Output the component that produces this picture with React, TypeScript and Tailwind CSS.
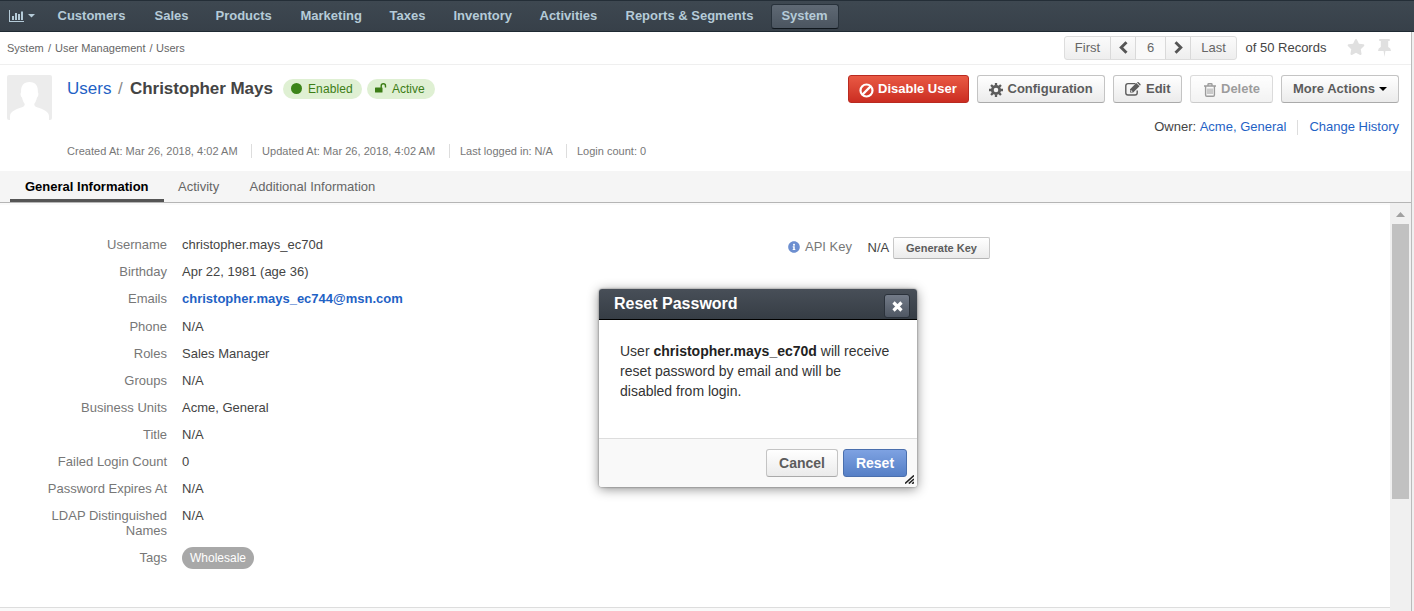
import React from "react";
import { FaInfoCircle, FaStar } from "react-icons/fa";

const navItems = [
  { label: "Customers", box: "w-[97px]" },
  { label: "Sales", box: "w-[61px]" },
  { label: "Products", box: "w-[85px]" },
  { label: "Marketing", box: "w-[89px]" },
  { label: "Taxes", box: "w-[64px]" },
  { label: "Inventory", box: "w-[86px]" },
  { label: "Activities", box: "w-[86px]" },
  { label: "Reports & Segments", box: "w-[145px]" },
];

const fields: { label: string; value: React.ReactNode; height?: string }[] = [
  { label: "Username", value: "christopher.mays_ec70d" },
  { label: "Birthday", value: "Apr 22, 1981 (age 36)" },
  {
    label: "Emails",
    value: <a className="font-bold text-[#1f62c5]">christopher.mays_ec744@msn.com</a>,
    height: "h-7",
  },
  { label: "Phone", value: "N/A" },
  { label: "Roles", value: "Sales Manager" },
  { label: "Groups", value: "N/A" },
  { label: "Business Units", value: "Acme, General" },
  { label: "Title", value: "N/A" },
  { label: "Failed Login Count", value: "0" },
  { label: "Password Expires At", value: "N/A" },
  { label: "LDAP Distinguished Names", value: "N/A", height: "h-[42px]" },
];

function Caret({ className }: { className: string }) {
  return (
    <svg className={className} width="8" height="4" viewBox="0 0 8 4">
      <path d="M0 0h8L4 4z" fill="currentColor" />
    </svg>
  );
}

function ChartIcon() {
  return (
    <svg width="15" height="12" viewBox="0 0 15 12" fill="currentColor">
      <path d="M0 0h1v11h14v1H0zM3 6h2v4H3zM6 3h2v7H6zM9 4h2v6H9zM12 1.500h2V10h-2z" />
    </svg>
  );
}

function UnlockIcon() {
  return (
    <svg width="12" height="10" viewBox="0 0 12 10">
      <rect x="0" y="4.500" width="7.500" height="5" rx="0.500" fill="currentColor" />
      <path d="M6.200 5V2.900a2.150 2.150 0 0 1 4.300 0V4.600" fill="none" stroke="currentColor" strokeWidth="1.400" />
    </svg>
  );
}

function BanIcon() {
  return (
    <svg width="15" height="15" viewBox="0 0 15 15" fill="none" stroke="currentColor" strokeWidth="2.200">
      <circle cx="7.500" cy="7.500" r="6" />
      <path d="M3.400 11.600 11.600 3.400" />
    </svg>
  );
}

function GearIcon() {
  return (
    <svg width="14" height="14" viewBox="0 0 14 14" stroke="currentColor">
      <circle cx="7" cy="7" r="3.700" fill="none" strokeWidth="2.800" />
      <path
        d="M7 0v2.500M7 11.500V14M0 7h2.500M11.500 7H14M2.050 2.050l1.800 1.800M10.150 10.150l1.800 1.800M2.050 11.950l1.800-1.800M10.150 3.850l1.800-1.800"
        strokeWidth="2.300"
      />
    </svg>
  );
}

function PinIcon() {
  return (
    <svg width="13" height="18" viewBox="0 0 13 18" fill="currentColor">
      <path d="M2 0h9q1 0 1 1t-1 1h-.8v6q2.800 1.200 2.800 4H7.400L6.500 18l-.9-6H0q0-2.800 2.800-4V2H2Q1 2 1 1t1-1z" />
    </svg>
  );
}

function TrashIcon() {
  return (
    <svg width="12" height="14" viewBox="0 0 12 14" fill="none" stroke="currentColor">
      <path d="M0 3h12M4 3V1.500Q4 .8 4.700 .8h2.600Q8 .8 8 1.500V3M1.600 3v9q0 1.300 1.200 1.300h6.400q1.200 0 1.200-1.300V3" strokeWidth="1.400" />
      <path d="M4 5.500v5.500M6 5.500v5.500M8 5.500v5.500" />
    </svg>
  );
}

function EditIcon() {
  return (
    <svg width="16" height="14" viewBox="0 0 16 14">
      <path
        d="M10.500 1.600H3A2.200 2.200 0 0 0 .8 3.800v7A2.200 2.200 0 0 0 3 13h7a2.200 2.200 0 0 0 2.200-2.200V8.500"
        fill="none"
        stroke="currentColor"
        strokeWidth="1.400"
      />
      <path d="M5 7.300 11.300 1l3.200 3.200L8.200 10.500H5zM12 .5l.4-.3q.6-.5 1.200 0l1.800 1.800q.5.600 0 1.200l-.4.500z" fill="currentColor" />
      <path d="M6.100 8.200v1.200h1.200" fill="none" stroke="#fff" strokeWidth=".8" />
    </svg>
  );
}

function Chevron({ flip }: { flip?: boolean }) {
  return (
    <svg className={flip ? "rotate-180" : ""} width="9" height="13" viewBox="0 0 9 13">
      <path d="M7.500 1.200 2.200 6.500l5.300 5.300" fill="none" stroke="currentColor" strokeWidth="2.900" />
    </svg>
  );
}

function Avatar() {
  return (
    <svg width="45" height="45" viewBox="0 0 45 45">
      <rect width="45" height="45" rx="2" fill="#ececec" />
      <path
        d="M22.500 7c6 0 8.800 4 8.400 10.500 1 .6.500 4-.9 5-.6 3-1.600 5-2.800 6.500.1 1.800 1.200 2.800 3.600 3.500 6 2 11.200 4.500 11.200 8.500V45H3v-4c0-4 5.200-6.500 11.200-8.500 2.400-.7 3.500-1.700 3.600-3.500-1.200-1.500-2.200-3.500-2.800-6.500-1.400-1-1.900-4.400-.9-5C13.700 11 16.500 7 22.500 7z"
        fill="#fff"
      />
    </svg>
  );
}

const button =
  "flex h-7 items-center rounded-[3px] border border-[#c4c4c4] border-b-[#aaa] bg-linear-to-b from-white to-[#ebebeb] font-bold text-[#5c5c5c]";

function Header() {
  return (
    <header className="flex h-8 shrink-0 items-center border-t border-b border-t-[#242e37] border-b-[#1f2a33] bg-linear-to-b from-[#3e4851] to-[#374049] font-bold text-[#b5cbd8]">
      <div className="flex w-[57.500px] items-center gap-1 pl-[9px]">
        <ChartIcon />
        <Caret className="h-[3.500px] w-[7px]" />
      </div>
      {navItems.map((item) => (
        <a key={item.label} className={`${item.box} whitespace-nowrap`}>
          {item.label}
        </a>
      ))}
      <a className="flex h-[25px] w-[68px] items-center justify-center rounded-[3px] border border-[#28323b] border-b-[#10171d] bg-linear-to-b from-[#5f6974] to-[#4b5560]">
        System
      </a>
    </header>
  );
}

function TopBar() {
  return (
    <div className="flex h-[33px] shrink-0 items-center justify-between border-b border-[#efefef] pr-[18px] pl-[7px]">
      <div className="flex text-[11px] whitespace-nowrap text-[#666]">
        <span className="w-[41px]">System</span>
        <span className="w-[7px]">/</span>
        <span className="w-[94.500px]">User Management</span>
        <span className="w-[6.500px]">/</span>
        <span>Users</span>
      </div>
      <div className="flex items-center text-[#444]">
        <div className="flex h-6 w-[173px] rounded-[3px] border border-[#ddd] bg-linear-to-b from-[#fbfbfb] to-[#eee] text-[#666]">
          <span className="flex w-[46px] items-center justify-center border-r border-[#d9d9d9]">First</span>
          <span className="flex w-[25px] items-center justify-center border-r border-[#d9d9d9] pb-0.5 text-[#555]">
            <Chevron />
          </span>
          <span className="flex w-[30px] items-center justify-center border-r border-[#d9d9d9] bg-[#f9f9f9]">6</span>
          <span className="flex w-[25px] items-center justify-center border-r border-[#d9d9d9] pb-0.5 text-[#555]">
            <Chevron flip />
          </span>
          <span className="flex grow items-center justify-center">Last</span>
        </div>
        <span className="ml-[8.500px] w-[101.500px] whitespace-nowrap">of 50 Records</span>
        <FaStar className="size-[18px] -translate-y-px text-[#e0e0e0]" />
        <span className="mr-0.5 ml-[13px] text-[#e0e0e0]">
          <PinIcon />
        </span>
      </div>
    </div>
  );
}

function Meta({ children, box }: { children: React.ReactNode; box: string }) {
  return <span className={`${box} flex h-3.5 items-center whitespace-nowrap`}>{children}</span>;
}

function RecordHeader() {
  return (
    <section className="flex h-[106px] shrink-0 pt-2.5 pr-3 pl-[7px]">
      <Avatar />
      <div className="ml-[15px] grow">
        <div className="flex h-7 items-center">
          <h1 className="flex w-[216px] items-center text-[17px] whitespace-nowrap text-[#444]">
            <a className="w-[51px] text-[#1f62c5]">Users</a>
            <span className="w-3 text-[#888]">/</span>
            <strong className="tracking-[-0.05px]">Christopher Mays</strong>
          </h1>
          <span className="flex h-5 w-[79px] items-center rounded-full bg-[#dff0d3] pl-2 text-xs text-[#3c7d16]">
            <span className="mr-1.5 size-[11px] -translate-y-px rounded-full bg-[#3b8418]" />
            <span className="tracking-[0.12px]">Enabled</span>
          </span>
          <span className="ml-[5px] flex h-5 w-[68px] items-center gap-[5px] rounded-full bg-[#dff0d3] pl-2 text-xs text-[#3c7d16]">
            <span className="-translate-y-px">
              <UnlockIcon />
            </span>
            Active
          </span>
        </div>
        <div className="mt-[41px] flex text-[11px] text-[#777]">
          <Meta box="w-[184px] tracking-[0.04px]">Created At: Mar 26, 2018, 4:02 AM</Meta>
          <Meta box="w-[198px] border-l border-[#ddd] pl-2.5 tracking-[0.04px]">Updated At: Mar 26, 2018, 4:02 AM</Meta>
          <Meta box="w-[117px] border-l border-[#ddd] pl-2.5">Last logged in: N/A</Meta>
          <Meta box="border-l border-[#ddd] pl-2.5">Login count: 0</Meta>
        </div>
      </div>
      <div className="flex flex-col items-end">
        <div className="flex gap-2">
          <a className="flex h-7 w-[121px] items-center gap-1 rounded-[3px] border border-[#b92a20] bg-linear-to-b from-[#e95944] to-[#cb2c21] pl-2.5 font-bold text-white">
            <span className="translate-y-px">
              <BanIcon />
            </span>
            Disable User
          </a>
          <a className={`${button} w-32 gap-[4.500px] pl-[11px]`}>
            <span className="translate-y-px">
              <GearIcon />
            </span>
            Configuration
          </a>
          <a className={`${button} w-[69px] gap-[5px] pl-[11px]`}>
            <EditIcon />
            Edit
          </a>
          <a className={`${button} w-[83px] gap-[5px] pl-[13px] opacity-60`}>
            <span className="translate-y-px">
              <TrashIcon />
            </span>
            Delete
          </a>
          <a className={`${button} w-[118px] gap-1 pl-[11px]`}>
            More Actions
            <Caret className="text-black" />
          </a>
        </div>
        <div className="mt-4 flex h-4 items-center text-[#444]">
          Owner:&nbsp;<a className="text-[#1f62c5]">Acme, General</a>
          <a className="ml-[11px] flex h-[15px] items-center border-l border-[#ddd] pl-[11px] text-[#1f62c5]">Change History</a>
        </div>
      </div>
    </section>
  );
}

function Tabs() {
  return (
    <nav className="flex h-8 shrink-0 border-b border-[#b5b5b5] bg-[#f5f5f5] pt-px pl-2.5 text-[#666]">
      <a className="flex h-[30px] w-[154px] items-center border-b-[3px] border-[#555] pt-0.5 pl-[15px] font-bold text-black">
        General Information
      </a>
      <a className="flex h-[29px] w-[75.500px] items-center pl-3.5">Activity</a>
      <a className="flex h-[29px] items-center pl-2.5">Additional Information</a>
    </nav>
  );
}

function Details() {
  return (
    <div className="flex min-h-0 grow">
      <div className="flex w-[1390px] flex-col">
        <div className="flex h-[405px] shrink-0 border-b border-[#ddd] pt-[34px] shadow-[inset_0_2px_1px_#fafafa]">
          <div className="w-[787.500px]">
            {fields.map((f) => (
              <div key={f.label} className={`${f.height ?? "h-[27px]"} flex leading-[15px]`}>
                <div className="w-[167px] pl-10 text-right text-[#777]">{f.label}</div>
                <div className="ml-[15px] text-[#444]">{f.value}</div>
              </div>
            ))}
            <div className="flex leading-[15px]">
              <div className="w-[167px] text-right text-[#777]">Tags</div>
              <span className="-mt-[3px] ml-[15px] flex h-[22px] w-[72px] items-center justify-center rounded-full bg-[#a8a8a8] text-xs text-white">
                Wholesale
              </span>
            </div>
          </div>
          <div className="flex h-[22px] items-center whitespace-nowrap">
            <span className="flex w-[80px] items-center gap-[5.500px] pb-[3px] text-[#777]">
              <FaInfoCircle className="size-[12px] text-[#6d8fd0]" />
              API Key
            </span>
            <span className="w-[25.500px] text-[#444]">N/A</span>
            <a className="flex h-[22px] w-[97px] items-center justify-center rounded-[2px] border border-[#c8c8c8] border-b-[#b5b5b5] bg-linear-to-b from-white to-[#ebebeb] text-[11px] font-bold text-[#5c5c5c]">
              Generate Key
            </a>
          </div>
        </div>
        <div className="grow bg-[#f9f9f9]" />
      </div>
      <div className="flex w-[21px] flex-col items-center bg-[#f0f0f0] pt-[9px]">
        <svg width="9" height="5" viewBox="0 0 9 5">
          <path d="M0 5h9L4.500 0z" fill="#a0a0a0" />
        </svg>
        <div className="mt-[7px] h-[275px] w-[17px] shrink-0 bg-[#c1c1c1]" />
      </div>
    </div>
  );
}

function ResetDialog() {
  return (
    <div
      role="dialog"
      className="absolute top-[289px] left-[599px] flex h-[198px] w-[318px] flex-col rounded-[3px] bg-white shadow-[0_0_2px_rgba(0,0,0,.5),0_2px_12px_rgba(0,0,0,.45)]"
    >
      <div className="flex h-[31px] items-start justify-between rounded-t-[3px] border-b border-black bg-linear-to-b from-[#484f58] to-[#363d45] pr-[7px] pl-[15px]">
        <h2 className="pt-1.5 text-base leading-[18px] font-bold text-white">Reset Password</h2>
        <button className="mt-[5px] flex h-6 w-[26px] items-center justify-center rounded-[3px] border border-[#2b323b] bg-linear-to-b from-[#737b88] to-[#4f5763] text-white">
          <svg width="11" height="11" viewBox="0 0 11 11">
            <path d="M1.500 1.500l8 8M9.500 1.500l-8 8" stroke="currentColor" strokeWidth="3.200" />
          </svg>
        </button>
      </div>
      <p className="grow pt-[21px] pr-5 pl-[21px] text-sm leading-5 text-[#333]">
        User <strong className="text-[#222]">christopher.mays_ec70d</strong> will receive
        <br />
        reset password by email and will be
        <br />
        disabled from login.
      </p>
      <div className="relative flex h-[49px] justify-end gap-[5px] rounded-b-[3px] border-t border-[#ddd] bg-[#f9f9f9] pt-2.5 pr-2.5">
        <button className={`${button} w-[72px] justify-center text-sm`}>Cancel</button>
        <button className="flex h-7 w-16 items-center justify-center rounded-[3px] border border-[#4a6fad] bg-linear-to-b from-[#7ea2e2] to-[#557fc6] text-sm font-bold text-white">
          Reset
        </button>
        <svg className="absolute right-[3px] bottom-[3px]" width="9" height="9" viewBox="0 0 9 9" stroke="#222" strokeWidth="1.600">
          <path d="M0 8.500L9 0.500M3.800 8.500L9 4M7.200 8.800L9 7.200" />
        </svg>
      </div>
    </div>
  );
}

export default function App() {
  return (
    <div className="relative flex h-[611px] w-[1414px] flex-col overflow-hidden bg-white font-['Liberation_Sans',Arial,sans-serif] text-[13px] leading-4">
      <Header />
      <div className="flex min-h-0 grow bg-[#f0f0f0]">
        <main className="flex w-[1412px] flex-col border-r border-[#bbb] bg-white">
          <TopBar />
          <RecordHeader />
          <Tabs />
          <Details />
        </main>
      </div>
      <ResetDialog />
    </div>
  );
}
